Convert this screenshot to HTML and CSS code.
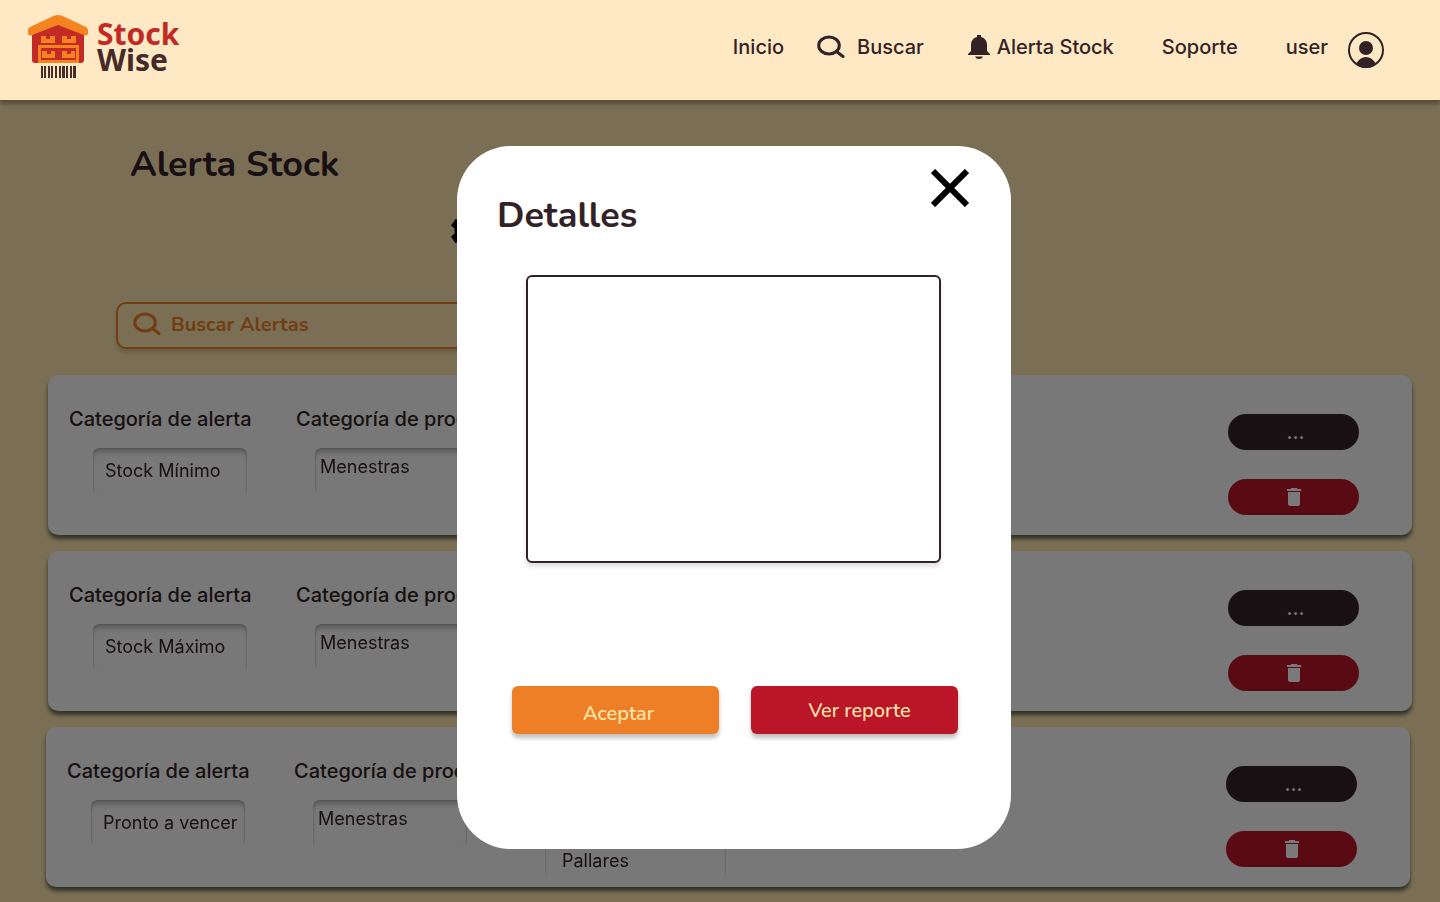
FILE: index.html
```html
<!DOCTYPE html>
<html lang="es">
<head>
<meta charset="utf-8">
<meta name="viewport" content="width=device-width, initial-scale=1">
<title>StockWise - Alerta Stock</title>
<link rel="stylesheet" href="styles.css">
</head>
<body>
<header class="topbar">
  <a class="logo" href="#">
    <svg class="logo-mark" viewBox="0 0 62 64" width="62" height="64" aria-hidden="true">
      <path fill="#c32a26" d="M5 18 31 9l26 9v28a3 3 0 0 1-3 3H8a3 3 0 0 1-3-3z"/>
      <path fill="#f58320" d="M27.500 1.600q3.500-1.400 7 0L59 13q2 1 2 3v3q0 3-3 2.500L31 11 4 21.500Q1 22 1 19v-3q0-2 2-3z"/>
      <path fill="#f58320" fill-rule="evenodd" d="M11 31h41v18H11zM14 34v12h35V34z"/>
      <g fill="#f58320">
        <path d="M14 22h5v3h4v-3h5v7H14zM35 22h5v3h4v-3h5v7H35z"/>
        <path d="M15 37h5v3h4v-3h4v7H15zM35 37h5v3h4v-3h4v7H35z"/>
      </g>
      <path fill="#4a2c26" d="M14 52h2v12h-2zM17 52h2v12h-2zM21 52h2v12h-2zM24 52h2v12h-2zM28 52h2v12h-2zM32 52h2v12h-2zM35 52h3v12h-3zM39 52h2v12h-2zM43 52h2v12h-2zM46 52h3v12h-3z"/>
    </svg>
    <span class="logo-text"><span class="logo-top">Stock</span><span>Wise</span></span>
  </a>
  <nav class="nav">
    <a href="#">Inicio</a>
    <a class="nav-search" href="#">
      <svg viewBox="0 0 28 24" width="28" height="24" fill="none" stroke="currentColor" stroke-width="3" aria-hidden="true"><ellipse cx="12" cy="10.500" rx="10.300" ry="8.500"/><path stroke-linecap="round" d="m19.500 16.500 6.500 5"/></svg>
      Buscar
    </a>
    <a class="nav-alert" href="#">
      <svg viewBox="0 0 24 26" width="24" height="26" fill="currentColor" aria-hidden="true"><path d="M10 1h4v2c4 1 6 4 6 8v6l3 3v1H1v-1l3-3v-6c0-4 2-7 6-8zM8 22.500h8q-1 2.500-4 2.500t-4-2.500z"/></svg>
      Alerta Stock
    </a>
    <a class="nav-wide" href="#">Soporte</a>
    <a class="nav-user nav-wide" href="#">
      user
      <svg viewBox="0 0 36 36" width="36" height="36" aria-hidden="true"><circle cx="18" cy="18" r="17" fill="none" stroke="currentColor" stroke-width="2"/><circle cx="18" cy="16" r="7" fill="currentColor"/><path fill="currentColor" d="M8 32q4-7 10-7t10 7q-4 4-10 4T8 32z"/></svg>
    </a>
  </nav>
</header>

<div class="page">
  <main class="content">
    <h1 class="title">Alerta Stock</h1>
    <div class="tools">
      <svg viewBox="0 0 28 26" width="28" height="26" aria-hidden="true"><path fill-rule="evenodd" d="m4.600 1-4.600 6.600 3.600 3v4.800L0 18.600 4.300 25 9 23l2 3h6l2-3 5 2 4-7-4-3v-4l4-3-5-7-4 2-2-3h-6L9 3zM14 9a4 4 0 1 1 0 8 4 4 0 0 1 0-8z"/></svg>
    </div>
    <label class="search">
      <svg viewBox="0 0 28 24" width="28" height="24" fill="none" stroke="currentColor" stroke-width="3" aria-hidden="true"><ellipse cx="12" cy="10.500" rx="10.300" ry="8.500"/><path stroke-linecap="round" d="m19.500 16.500 6.500 5"/></svg>
      <input type="search" placeholder="Buscar Alertas" aria-label="Buscar Alertas">
    </label>

    <section class="cards">
      <article class="card">
        <div class="group group-alert"><label for="a1">Categoría de alerta</label><input id="a1" class="field" value="Stock Mínimo" readonly></div>
        <div class="group group-product"><label for="p1">Categoría de producto</label><input id="p1" class="field" value="Menestras" readonly></div>
        <div class="actions">
          <button class="pill pill-dark" type="button" aria-label="Detalles">...</button>
          <button class="pill pill-red" type="button" aria-label="Eliminar"><svg viewBox="0 0 14 18" width="14" height="18" fill="currentColor" aria-hidden="true"><path d="M4 0h6v1h4v2H0V1h4zM1 4h12v12q0 2-2 2H3q-2 0-2-2z"/></svg></button>
        </div>
      </article>
      <article class="card">
        <div class="group group-alert"><label for="a2">Categoría de alerta</label><input id="a2" class="field" value="Stock Máximo" readonly></div>
        <div class="group group-product"><label for="p2">Categoría de producto</label><input id="p2" class="field" value="Menestras" readonly></div>
        <div class="actions">
          <button class="pill pill-dark" type="button" aria-label="Detalles">...</button>
          <button class="pill pill-red" type="button" aria-label="Eliminar"><svg viewBox="0 0 14 18" width="14" height="18" fill="currentColor" aria-hidden="true"><path d="M4 0h6v1h4v2H0V1h4zM1 4h12v12q0 2-2 2H3q-2 0-2-2z"/></svg></button>
        </div>
      </article>
      <article class="card card-last">
        <div class="group group-alert"><label for="a3">Categoría de alerta</label><input id="a3" class="field" value="Pronto a vencer" readonly></div>
        <div class="group group-product"><label for="p3">Categoría de producto</label><input id="p3" class="field" value="Menestras" readonly></div>
        <textarea class="field field-tall" aria-label="Productos" readonly>Pallares</textarea>
        <div class="actions">
          <button class="pill pill-dark" type="button" aria-label="Detalles">...</button>
          <button class="pill pill-red" type="button" aria-label="Eliminar"><svg viewBox="0 0 14 18" width="14" height="18" fill="currentColor" aria-hidden="true"><path d="M4 0h6v1h4v2H0V1h4zM1 4h12v12q0 2-2 2H3q-2 0-2-2z"/></svg></button>
        </div>
      </article>
    </section>
  </main>

  <div class="overlay">
    <section class="modal" role="dialog" aria-modal="true" aria-labelledby="modal-title">
      <button class="close" type="button" aria-label="Cerrar"><svg viewBox="0 0 38 38" width="38" height="38" stroke="#000" stroke-width="6" aria-hidden="true"><path d="m2 2 34 34M36 2 2 36"/></svg></button>
      <h2 class="title" id="modal-title">Detalles</h2>
      <textarea class="details" aria-labelledby="modal-title"></textarea>
      <div class="modal-actions">
        <button class="btn btn-accept" type="button">Aceptar</button>
        <button class="btn btn-report" type="button">Ver reporte</button>
      </div>
    </section>
  </div>
</div>
</body>
</html>
```
FILE: styles.css
```css
* { box-sizing: border-box; }

body {
  margin: 0;
  min-height: 100vh;
  display: flex;
  flex-direction: column;
  font-family: Inter, sans-serif;
  font-size: 20px;
  font-weight: 500;
  color: #322226;
}

button, input, textarea { font: inherit; color: inherit; border: 0; margin: 0; }
button { cursor: pointer; padding: 0; }
svg { display: block; flex: none; }

.topbar {
  position: relative;
  z-index: 3;
  height: 100px;
  flex: none;
  display: flex;
  justify-content: space-between;
  background: #ffe9c5;
  box-shadow: 0 4px 4px rgba(0, 0, 0, .3);
}

.logo {
  display: flex;
  align-items: flex-start;
  gap: 8px;
  padding: 14px 0 0 27px;
  text-decoration: none;
  color: #442a29;
}
.logo-text {
  display: flex;
  flex-direction: column;
  padding-top: 7px;
  font: bold 30px/26px "Noto Sans", sans-serif;
}
.logo-top { color: #c32a26; }

.nav {
  display: flex;
  align-items: center;
  gap: 33px;
  padding: 0 56px 6px 0;
}
.nav a {
  display: flex;
  align-items: center;
  color: inherit;
  text-decoration: none;
}
.nav .nav-search { gap: 12px; }
.nav .nav-alert { gap: 6px; margin-left: 10px; }
.nav .nav-wide { margin-left: 15px; }
.nav .nav-user { gap: 20px; }
.nav-user svg { margin-top: 6px; }

.page {
  position: relative;
  flex: 1;
  background: #ffe9b0;
}

.title {
  margin: 0;
  padding-top: 1px;
  font: bold 36px/48px Nunito, Lato, sans-serif;
}

.content { padding: 40px 28px 15px 48px; }
.content .title { padding-left: 82px; }

.tools { padding: 29px 0 0 403px; color: #000; }

.search {
  display: flex;
  align-items: center;
  gap: 10px;
  width: 600px;
  height: 47px;
  margin: 58px 0 0 68px;
  padding: 0 15px 4px;
  border: 2px solid #ee7f26;
  border-radius: 10px;
  box-shadow: 0 4px 4px rgba(0, 0, 0, .15);
  color: #ee7f26;
}
.search input {
  flex: 1;
  min-width: 0;
  padding: 2px 0 0;
  background: none;
  font: bold 20px/24px Nunito, Lato, sans-serif;
}
.search input::placeholder { color: inherit; opacity: 1; }

.cards {
  display: flex;
  flex-direction: column;
  gap: 16px;
  margin-top: 26px;
}
.card {
  display: flex;
  align-items: flex-start;
  min-height: 160px;
  padding: 32px 53px 0 21px;
  border-radius: 10px;
  background: #fafafa;
  box-shadow: 0 4px 4px rgba(0, 18, 22, .6);
}
.card-last { margin: 0 2px 0 -2px; }

.group {
  display: flex;
  flex-direction: column;
  gap: 17px;
  width: 227px;
  white-space: nowrap;
}
.group label { line-height: 24px; }

.field {
  width: 154px;
  height: 46px;
  font-size: 18px;
  font-weight: 400;
  background: none;
  border-radius: 6px 6px 0 0;
  box-shadow: inset 0 5px 4px -1px rgba(0, 0, 0, .25), inset 0 0 2px rgba(0, 0, 0, .25);
  -webkit-mask-image: linear-gradient(#000 90%, transparent);
  mask-image: linear-gradient(#000 90%, transparent);
}
.group-alert .field { margin-left: 24px; padding: 0 0 2px 12px; }
.group-product .field { margin-left: 19px; padding: 0 0 10px 5px; }
.field-tall {
  width: 181px;
  height: 78px;
  margin: 41px 0 0 24px;
  padding: 50px 0 0 17px;
  line-height: 22px;
  resize: none;
  overflow: hidden;
}

.actions {
  display: flex;
  flex-direction: column;
  gap: 29px;
  margin-left: auto;
  padding-top: 7px;
}
.pill {
  display: flex;
  align-items: center;
  justify-content: center;
  width: 131px;
  height: 36px;
  border-radius: 18px;
  color: #fff;
}
.pill-dark { background: #322226; padding-left: 4px; }
.pill-red { background: #bb1628; }

.overlay {
  position: absolute;
  inset: 0;
  z-index: 2;
  display: flex;
  justify-content: center;
  align-items: flex-start;
  padding: 46px 0 0 28px;
  background: rgba(0, 0, 0, .52);
}
.modal {
  position: relative;
  width: 554px;
  padding: 45px 53px 115px 55px;
  border-radius: 54px;
  background: #fff;
}
.modal .title { margin-left: -15px; }
.close {
  position: absolute;
  top: 23px;
  right: 42px;
  background: none;
}
.details {
  display: block;
  width: 415px;
  height: 288px;
  margin: 35px 0 0 14px;
  border: 2px solid #322226;
  border-radius: 6px;
  box-shadow: 0 4px 4px rgba(50, 34, 38, .14);
  resize: none;
}
.modal-actions {
  display: grid;
  grid-template-columns: 1fr 1fr;
  gap: 32px;
  margin-top: 123px;
}
.btn {
  height: 48px;
  border-radius: 6px;
  box-shadow: 0 4px 4px rgba(0, 0, 0, .25);
  color: #ffe9b0;
  font-family: Nunito, Lato, sans-serif;
}
.btn-accept { background: #ee7f26; padding: 6px 0 0 6px; }
.btn-report { background: #bb1628; padding-left: 10px; }
```
